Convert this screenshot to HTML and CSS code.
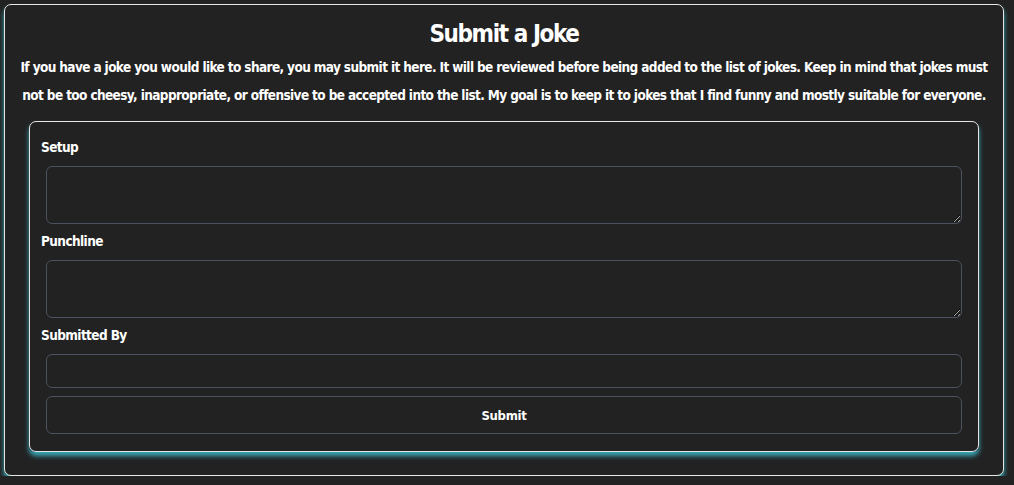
FILE: index.html
```html
<!DOCTYPE html>
<html lang="en">
<head>
<meta charset="utf-8">
<title>Submit a Joke</title>
<link rel="stylesheet" href="styles.css">
</head>
<body>
<main class="panel">
  <h1 class="title">Submit a Joke</h1>
  <p class="intro">If you have a joke you would like to share, you may submit it here. It will be reviewed before being added to the list of jokes. Keep in mind that jokes must not be too cheesy, inappropriate, or offensive to be accepted into the list. My goal is to keep it to jokes that I find funny and mostly suitable for everyone.</p>
  <form class="form-card">
    <label class="field-label" for="setup">Setup</label>
    <textarea class="field field-area" id="setup"></textarea>
    <label class="field-label" for="punchline">Punchline</label>
    <textarea class="field field-area" id="punchline"></textarea>
    <label class="field-label" for="by">Submitted By</label>
    <input class="field field-input" id="by" type="text">
    <button class="field submit-btn" type="button">Submit</button>
  </form>
</main>
</body>
</html>
```

FILE: styles.css
```css
html, body {
  margin: 0;
  background: #222222;
}
body {
  padding: 4px 10px 0 4px;
  font-family: "DejaVu Sans Condensed", "DejaVu Sans", sans-serif;
  font-stretch: condensed;
  font-weight: 700;
  color: #ffffff;
}
.panel {
  box-sizing: border-box;
  height: 472px;
  border: 1px solid #e6e6e6;
  border-radius: 7px;
  background: #222222;
  box-shadow: 0 4px 5px #3aa9b8;
  padding: 10px 24px 0 24px;
  display: flex;
  flex-direction: column;
}
.title {
  margin: 0;
  font-size: 24px;
  letter-spacing: -1.4px;
  line-height: 38px;
  text-align: center;
  font-weight: 700;
}
.intro {
  margin: 0 -12px;
  font-size: 13.5px;
  letter-spacing: -0.62px;
  line-height: 28px;
  text-align: center;
}
.form-card {
  margin-top: 12px;
  border: 1px solid #e6e6e6;
  border-radius: 7px;
  box-shadow: 0 4px 5px #3aa9b8;
  padding: 13px 16px 17px 11px;
  display: flex;
  flex-direction: column;
}
.field-label {
  font-size: 13.5px;
  letter-spacing: -0.6px;
  line-height: 24px;
  margin-bottom: 7px;
}
.field {
  box-sizing: border-box;
  margin-left: 5px;
  border: 1px solid #4b5160;
  border-radius: 6px;
  background: #222222;
  color: #ffffff;
  font-family: inherit;
}
.field-area {
  height: 58px;
  margin-bottom: 5px;
  resize: vertical;
}
.field-input {
  height: 34px;
  margin-bottom: 8px;
}
.submit-btn {
  height: 38px;
  font-size: 13px;
  letter-spacing: -0.3px;
  font-weight: 700;
}
```
